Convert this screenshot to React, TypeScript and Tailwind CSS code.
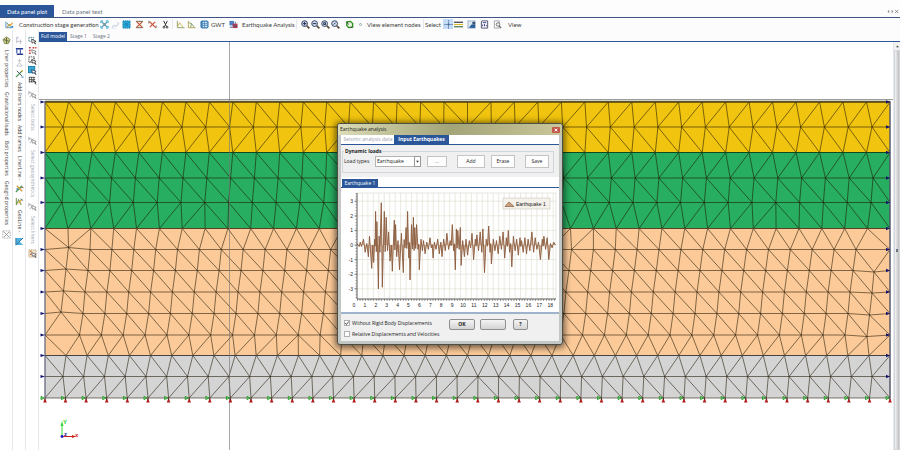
import type { ReactNode } from 'react';

type Row = { y: number; from: number; to: number; count: number };
type Point = [number, number];

const LEFT = 45;
const RIGHT = 890;

// inner nodes of each mesh row, the edge nodes are added at both sides
const rows: Row[] = [
  { y: 102, from: 68.5, to: 866.5, count: 35 },
  { y: 127, from: 63, to: 872, count: 35 },
  { y: 152.5, from: 68.5, to: 866.5, count: 35 },
  { y: 178, from: 64, to: 873, count: 35 },
  { y: 202.5, from: 62, to: 871, count: 35 },
  { y: 228.5, from: 68, to: 867.5, count: 36 },
  { y: 249.5, from: 90, to: 856, count: 36 },
  { y: 270.5, from: 88, to: 853, count: 36 },
  { y: 292, from: 85, to: 850, count: 36 },
  { y: 313.5, from: 83, to: 848, count: 36 },
  { y: 335, from: 79.5, to: 845, count: 36 },
  { y: 355.5, from: 66, to: 869, count: 39 },
  { y: 376.5, from: 63, to: 872, count: 40 },
  { y: 398, from: 65.5, to: 869.5, count: 40 },
];

// nodes near the edges that sit slightly off their row
const extraLeft: Record<number, Point> = {
  6: [68.5, 247.5],
  7: [66, 269],
  8: [63.5, 291],
  9: [61, 312],
};
const extraRight: Record<number, Point> = {
  7: [874, 272],
  8: [872, 293],
  9: [869.5, 315],
  10: [867, 336.5],
};

const mesh: Point[][] = rows.map((row, r) => {
  const step = (row.to - row.from) / (row.count - 1);
  const inner: Point[] = Array.from({ length: row.count }, (_, i) => [
    row.from + i * step,
    row.y,
  ]);
  if (extraLeft[r]) inner.unshift(extraLeft[r]);
  if (extraRight[r]) inner.push(extraRight[r]);
  return [[LEFT, row.y], ...inner, [RIGHT, row.y]];
});

const dist = (a: Point, b: Point) => Math.hypot(a[0] - b[0], a[1] - b[1]);

// joins two rows into a strip of triangles, always taking the shorter diagonal
function strip(a: Point[], b: Point[]) {
  let i = 0;
  let j = 0;
  let d = '';
  while (i < a.length - 1 || j < b.length - 1) {
    if (i === a.length - 1) j++;
    else if (j === b.length - 1) i++;
    else if (dist(a[i], b[j + 1]) < dist(a[i + 1], b[j])) j++;
    else i++;
    d += `M${a[i][0].toFixed(1)} ${a[i][1]}L${b[j][0].toFixed(1)} ${b[j][1]}`;
  }
  return d;
}

const meshPath =
  mesh.map((row) => 'M' + row.map((p) => `${p[0].toFixed(1)} ${p[1]}`).join('L')).join('') +
  mesh.slice(1).map((row, i) => strip(mesh[i], row)).join('');

const layers = [
  { y: 102, height: 50.5, fill: '#f1c40f', line: '#4a3c00' },
  { y: 152.5, height: 76, fill: '#27ae60', line: '#0c4a20' },
  { y: 228.5, height: 127, fill: '#fcca98', line: '#5c4023' },
  { y: 355.5, height: 42.5, fill: '#d4d4d4', line: '#444444' },
];

function Model() {
  return (
    <svg
      viewBox="39 42 854 408"
      preserveAspectRatio="xMidYMin meet"
      className="block h-full w-full"
      role="img"
      aria-label="Model"
    >
      <path d="M39 99.5H893" stroke="#9a9a9a" />
      {layers.map((l) => (
        <rect key={l.y} x={LEFT} y={l.y} width={RIGHT - LEFT} height={l.height} fill={l.fill} />
      ))}
      <path d={meshPath} fill="none" stroke="#1d1400" strokeWidth="0.7" strokeOpacity="0.8" />
      {layers.map((l) => (
        <path key={l.y} d={`M${LEFT} ${l.y}H${RIGHT}`} stroke={l.line} strokeWidth="1.2" />
      ))}
      <path d="M45 101.5H890" stroke="#55502a" strokeWidth="1.4" />
      <path d="M45 101V398M890 101V398" stroke="#5b5f7a" strokeWidth="1.2" />
      <path d="M229.5 42V450" stroke="#777" strokeWidth="0.8" strokeOpacity="0.8" />
      {rows.slice(0, -1).map((r) => (
        <g key={r.y} fill="#14146e">
          <path d={`M40.5 ${r.y - 1.5}L45 ${r.y}L40.5 ${r.y + 1.5}Z`} />
          <path d={`M886 ${r.y - 1.7}L890 ${r.y}L886 ${r.y + 1.7}Z`} />
        </g>
      ))}
      {mesh[mesh.length - 1].map(([x, y]) => (
        <g key={x}>
          <path d={`M${x - 4} ${y - 1.6}L${x - 0.8} ${y}L${x - 4} ${y + 1.6}Z`} fill="#8fe08f" stroke="#138a13" strokeWidth="0.8" />
          <path d={`M${x} ${y}L${x + 1.8} ${y + 4.5}H${x - 1.8}Z`} fill="#b01c1c" />
          <circle cx={x} cy={y + 1} r="0.7" fill="#3a1010" />
        </g>
      ))}
      <g strokeWidth="1" fontFamily="Liberation Sans, sans-serif" fontSize="6" fontWeight="bold">
        <path d="M62 436V424" stroke="#35d835" />
        <path d="M60.5 426L62 421L63.5 426Z" fill="#35d835" />
        <path d="M62 436.5H74" stroke="#cc2222" />
        <path d="M72 435L76 436.500L72 438Z" fill="#cc2222" />
        <circle cx="62" cy="436.5" r="1.4" fill="#1a1ac0" />
        <text x="63" y="424" fill="#22cc22">Y</text>
        <text x="64" y="436" fill="#1a1a90">z</text>
        <text x="75" y="437" fill="#cc2222">x</text>
      </g>
    </svg>
  );
}

/* ---------- icons ---------- */

function Svg({ children }: { children: ReactNode }) {
  return (
    <svg viewBox="0 0 10 10" className="size-[9px]" fill="none" strokeWidth="1" aria-hidden="true">
      {children}
    </svg>
  );
}

const icons = {
  stage: (
    <Svg>
      <path d="M1 2V8.500H9" stroke="#4a90c8" />
      <path d="M2 8L5 5L6 6L8.500 3" stroke="#e2a23a" strokeWidth="1.300" />
      <path d="M2 3L5 7" stroke="#4d8f5a" />
      <path d="M5 8H9V6.500L7 7Z" fill="#2d86c4" />
    </Svg>
  ),
  expand: (
    <Svg>
      <path d="M2 2L8 8M8 2L2 8" stroke="#3a8fb0" strokeWidth="1.200" />
      <path d="M1 3.500V1H3.500M6.500 1H9V3.500M9 6.500V9H6.500M3.500 9H1V6.500" stroke="#2aa0c8" />
      <rect x="3.500" y="3.500" width="3" height="3" fill="#7a9aa8" />
    </Svg>
  ),
  faint: (
    <Svg>
      <path d="M1 8L4 6L6 7L9 3" stroke="#a9bfd4" />
      <path d="M6 2L9 5M1 9H6" stroke="#c9d4de" strokeDasharray="1.500 1" />
    </Svg>
  ),
  region: (
    <Svg>
      <rect x="1" y="1" width="8" height="8" fill="#2aa9d8" stroke="#1678a4" strokeDasharray="1.500 0.800" />
      <path d="M3 3H7V7H3Z" fill="#1f8fc0" />
    </Svg>
  ),
  cutBars: (
    <Svg>
      <path d="M1 1.500H9M1 8.500H9" stroke="#6b5340" />
      <path d="M2 2L8 8M8 2L2 8" stroke="#c8502c" strokeWidth="1.300" />
    </Svg>
  ),
  cut: (
    <Svg>
      <path d="M1.500 1.500L8.500 8.500M8 2L2 8" stroke="#cc4d33" strokeWidth="1.300" />
      <path d="M1 1V4M9 6V9" stroke="#7b6a5c" />
    </Svg>
  ),
  scissors: (
    <Svg>
      <path d="M3 1L6 7M7 1L4 7" stroke="#333" strokeWidth="1.100" />
      <circle cx="3.300" cy="8" r="1" stroke="#333" />
      <circle cx="6.700" cy="8" r="1" stroke="#333" />
    </Svg>
  ),
  plotA: (
    <Svg>
      <path d="M1.500 1V8.500H9.500" stroke="#8a9a60" />
      <path d="M2 7L4 3L6 6L8 7.500" stroke="#c6b24c" />
    </Svg>
  ),
  plotB: (
    <Svg>
      <path d="M1.500 1V8.500H9.500" stroke="#b0a24a" />
      <path d="M2 3L5 4L8 8M4 8L5 4" stroke="#7d9a5e" />
    </Svg>
  ),
  water: (
    <Svg>
      <rect x="0.500" y="0.500" width="9" height="9" rx="2" fill="#3c7fb4" />
      <path d="M3 2H8V8H3Z" fill="#cfe3f2" />
      <path d="M3 4H8M3 6H8M5 2V8" stroke="#3c7fb4" strokeWidth="0.800" />
    </Svg>
  ),
  quake: (
    <Svg>
      <rect x="0.500" y="1" width="5" height="5" fill="#4a7fc0" />
      <rect x="4" y="4" width="5.500" height="5" fill="#b0404e" />
      <path d="M1 8H4M7 2V4M5 6L9 7.500" stroke="#3a4f90" />
    </Svg>
  ),
  green: (
    <Svg>
      <path d="M2 2L6 1.500L8.500 4V8L4 8.500L2 6Z" fill="#e9f6df" stroke="#2f8f1f" strokeWidth="1.500" />
      <path d="M2 2L4 5M6 8L8 8" stroke="#333" />
    </Svg>
  ),
  cross: (
    <Svg>
      <path d="M5 0V10M0 5H10" stroke="#5f7fa8" strokeWidth="0.800" />
      <circle cx="5" cy="5" r="1" fill="#3f5f90" />
    </Svg>
  ),
  lines: (
    <Svg>
      <path d="M0 2.500H10" stroke="#333" strokeWidth="1.300" />
      <path d="M0 5H10" stroke="#d8b400" />
      <path d="M0 7.500H10" stroke="#3f6f4a" strokeWidth="1.300" />
    </Svg>
  ),
  picture: (
    <Svg>
      <rect x="1" y="1" width="8" height="8" fill="#dce8f4" stroke="#8da4bd" strokeWidth="0.800" />
      <path d="M2 8.500L5 5H9V9Z" fill="#2d5f9c" />
      <path d="M6 2H9V5H6Z" fill="#35506e" />
    </Svg>
  ),
  report: (
    <Svg>
      <path d="M2 1H8.500V9H1.500V2Z" fill="#fff" stroke="#4a4a66" />
      <path d="M3 3H7M3 7V5M5 7V4.500M7 7V5.500" stroke="#2b3a80" />
    </Svg>
  ),
  preview: (
    <Svg>
      <path d="M1.500 1H7V9H1.500Z" fill="#fff" stroke="#8a8a8a" strokeWidth="0.800" />
      <circle cx="5.500" cy="5" r="2" stroke="#666" strokeWidth="0.900" fill="#eee" />
      <path d="M7 6.500L9 9" stroke="#666" strokeWidth="1.200" />
    </Svg>
  ),
  globe: (
    <Svg>
      <path d="M5 1L9 4L7 8.500H3L1 4Z" fill="#e3cc7a" stroke="#6f8a55" />
      <path d="M2 4L8 6M5 2V8" stroke="#47614a" />
    </Svg>
  ),
  faintNode: (
    <Svg>
      <path d="M2 1V8M2 6H8M6 4V9" stroke="#b9bcc4" />
      <path d="M1 1H4V3H1Z" fill="#ccd" />
    </Svg>
  ),
  beam: (
    <Svg>
      <path d="M1 2H9M2 8H9" stroke="#2b3c8c" strokeWidth="1.600" />
      <path d="M2 2V7M6 2V8" stroke="#4963b8" strokeWidth="1.400" />
    </Svg>
  ),
  faintPin: (
    <Svg>
      <path d="M5 1V5L2 9H8L5 5" stroke="#bfc3c8" />
      <path d="M3 3H7" stroke="#bfc3c8" />
    </Svg>
  ),
  tools: (
    <Svg>
      <path d="M1 9L8 2" stroke="#3e8f4a" strokeWidth="1.300" />
      <path d="M2 2L8 8" stroke="#3b4a58" />
      <circle cx="8" cy="2" r="1" fill="#d8b23a" />
      <path d="M7 9H9.500" stroke="#2f78b8" />
    </Svg>
  ),
  toolsWarm: (
    <Svg>
      <path d="M1 9L8 2" stroke="#4b9a56" strokeWidth="1.500" />
      <path d="M2 2L8 8" stroke="#d59b35" strokeWidth="1.500" />
      <circle cx="2.500" cy="5.500" r="1" fill="#4a84bb" />
      <path d="M7 4H9.500" stroke="#7a5a3a" />
    </Svg>
  ),
  line: (
    <Svg>
      <path d="M1.500 1V9M1.500 9L4 3L7 9" stroke="#7f9a58" strokeWidth="1.200" />
      <path d="M4 7L8 2" stroke="#e0a92f" strokeWidth="1.500" />
      <path d="M6 2L9 4" stroke="#4a84bb" />
    </Svg>
  ),
  geo: (
    <Svg>
      <path d="M1 1H9L5 5L9 9H1Z" fill="#4fb2dc" />
      <path d="M1 1V9M1 9L9 1" stroke="#2b6d9c" />
    </Svg>
  ),
  pick: (
    <Svg>
      <path d="M1 1.500H6V5" stroke="#3d7f8c" strokeDasharray="1.500 0.700" />
      <path d="M1 2V6H4" stroke="#3d7f8c" strokeDasharray="1.500 0.700" />
      <path d="M4 3.500L9 6L7 6.500L8.500 9L6 7L4.500 8Z" fill="#fff" stroke="#222" strokeWidth="0.800" />
    </Svg>
  ),
  pickRed: (
    <Svg>
      <path d="M1 2H3M5 2H7M1 5H3M1 8H3M8 2H9.500" stroke="#c84040" strokeWidth="1.600" />
      <path d="M4 4L9 6L7.500 7L9 9.500L6.500 7.500L5 8Z" fill="#fff" stroke="#555" strokeWidth="0.700" />
    </Svg>
  ),
  pickBox: (
    <Svg>
      <rect x="1" y="1" width="6" height="6" stroke="#444" strokeDasharray="1.500 0.800" />
      <path d="M2 7L7 2" stroke="#777" />
      <path d="M4 4L9 6L7.500 7L9 9.500L6.500 7.500L5 8Z" fill="#fff" stroke="#222" strokeWidth="0.800" />
    </Svg>
  ),
  pickFill: (
    <Svg>
      <rect x="0.500" y="0.500" width="7" height="7" fill="#39a9d8" stroke="#1d7aa6" />
      <path d="M4 4L9 6L7.500 7L9 9.500L6.500 7.500L5 8Z" fill="#fff" stroke="#124" strokeWidth="0.800" />
    </Svg>
  ),
  pickGrid: (
    <Svg>
      <path d="M1 1.500H8M1 4H8M1 6.500H6M1.500 1V7M4 1V7M6.500 1V7" stroke="#444" strokeWidth="0.900" />
      <path d="M5 5L9 7L7.500 7.500L9 9.500" stroke="#222" strokeWidth="0.900" />
    </Svg>
  ),
  pickFaint: (
    <Svg>
      <path d="M1 1V5M1 3H4M2 8L6 3" stroke="#a4a8ae" />
      <path d="M4 4L9 6L7.500 7L9 9.500L6.500 7.500L5 8Z" fill="#fff" stroke="#777" strokeWidth="0.800" />
    </Svg>
  ),
  pickWarm: (
    <Svg>
      <rect x="1" y="1" width="8" height="8" fill="#f3e3c6" stroke="#b9a88c" strokeDasharray="1.500 0.800" />
      <path d="M2 3L4 2M2 6H4" stroke="#cf7a3a" strokeWidth="1.300" />
      <path d="M4 4L9 6L7.500 7L9 9.500L6.500 7.500L5 8Z" fill="#fff" stroke="#445" strokeWidth="0.800" />
    </Svg>
  ),
  grid: (
    <Svg>
      <rect x="1" y="1" width="8" height="8" stroke="#aaa" strokeDasharray="2 1" />
      <path d="M2 2L8 8M8 2L2 8" stroke="#999" />
    </Svg>
  ),
};

function Zoom({ mark }: { mark: string }) {
  return (
    <Svg>
      <circle cx="4" cy="4" r="3.200" fill="#cfdcef" stroke="#3a4660" strokeWidth="1.100" />
      <path d="M6.500 6.500L9.300 9.300" stroke="#5d4a3a" strokeWidth="1.800" />
      <path d={mark} stroke="#22304e" strokeWidth="1.100" />
    </Svg>
  );
}

type IconName = keyof typeof icons;

function Tool({ name }: { name: IconName }) {
  return (
    <button type="button" aria-label={name} className="flex size-[9px] shrink-0 items-center">
      {icons[name]}
    </button>
  );
}

function Separator() {
  return <span className="h-[10px] w-px shrink-0 bg-gray-200" />;
}

function Toolbar() {
  return (
    <div className="flex h-3 items-center bg-[#fcfcfc] pl-[5px] whitespace-nowrap">
      <div className="flex w-[95px] items-center gap-[5px]">
        <Tool name="stage" />
        <button type="button">Construction stage generation</button>
      </div>
      <div className="flex w-[72px] items-center gap-[2px]">
        <Tool name="expand" />
        <Tool name="faint" />
        <Tool name="region" />
        <span className="flex flex-1 items-center justify-around">
          <Tool name="cutBars" />
          <Tool name="cut" />
          <Tool name="scissors" />
        </span>
      </div>
      <Separator />
      <div className="flex w-[26px] items-center gap-[2px] pl-[3px]">
        <Tool name="plotA" />
        <Tool name="plotB" />
      </div>
      <div className="flex w-[29px] items-center gap-[2px] pl-[1px]">
        <Tool name="water" />
        <button type="button">GWT</button>
      </div>
      <div className="flex w-[68px] items-center gap-1 pl-[1px]">
        <Tool name="quake" />
        <button type="button">Earthquake Analysis</button>
      </div>
      <Separator />
      <div className="flex w-[46px] items-center gap-[1px] pl-1">
        {['M2 4H6M4 2V6', 'M2 4H6', 'M3 3H5V5H3Z', 'M3 5L5 3'].map((mark) => (
          <button key={mark} type="button" aria-label="Zoom" className="size-[9px] shrink-0">
            <Zoom mark={mark} />
          </button>
        ))}
      </div>
      <div className="flex w-[80px] items-center gap-[5px] pl-[2px]">
        <Tool name="green" />
        <span className="size-[3px] rounded-full border border-gray-400" />
        <button type="button">View element nodes</button>
      </div>
      <Separator />
      <div className="flex items-center gap-[1px] pl-px">
        <button type="button" className="w-[17px] text-left">Select</button>
        <span className="flex h-[10px] w-[10px] items-center justify-center bg-[#c3dbf5]">
          <Tool name="cross" />
        </span>
        <Tool name="lines" />
      </div>
      <div className="flex items-center gap-[4px] pl-[4px]">
        <Tool name="picture" />
        <Tool name="report" />
        <span className="flex items-center gap-[6px]">
          <Tool name="preview" />
          <button type="button">View</button>
        </span>
      </div>
    </div>
  );
}

function SideBar({ children, gap = 'gap-[5px]' }: { children: ReactNode; gap?: string }) {
  return (
    <div
      className={`flex w-[13px] shrink-0 flex-col items-center overflow-hidden border-r border-gray-200 bg-white pt-[6px] font-['Open_Sans','Liberation_Sans',sans-serif] text-[5px] ${gap}`}
    >
      {children}
    </div>
  );
}

function SideText({ children, muted }: { children: ReactNode; muted?: boolean }) {
  return (
    <button
      type="button"
      className={`text-left whitespace-nowrap [writing-mode:vertical-rl] ${muted ? 'text-gray-400' : ''}`}
    >
      {children}
    </button>
  );
}

/* ---------- earthquake chart ---------- */

// time in tenths of the axis unit, acceleration
const signal: Point[] = [
  [0, 0.1], [2, -0.1], [3, 0.2], [4, -0.1], [6, 0.4], [7.5, -0.5], [9, 0.1], [10.5, -0.8], [11.5, 0.6],
  [13.5, -1.6], [14.5, 0], [15.3, -1.2], [16.2, 0.4], [17.1, 2.3], [18.3, 1.6], [19.6, -3], [21, -0.5],
  [22.3, 2.9], [23.2, -2.9], [25, 2.3], [26.8, 1.9], [28, -0.4], [29, 0.9], [30.3, -1.1], [31.5, 0],
  [32.4, -1.8], [34.2, 1.7], [35.4, 1.4], [36.4, -0.8], [37.6, 0.3], [39, -1.7], [40.7, 0.8],
  [42.5, -1.9], [44, -0.2], [45, 1.2], [46.4, 2.3], [47.5, -0.9], [48.6, -2.4], [50, 1.4], [51.7, 1.9],
  [53, 1.2], [54.7, 1.4], [56, -0.3], [57.2, -1.7], [58.7, 0.4], [60, -0.4], [61, 0.3], [62.5, -0.6],
  [64, 0.2], [65.5, -0.3], [67, 0.5], [68.2, -0.2], [69.8, -0.9], [71, 0.2], [72.5, -0.3], [74, 0.4],
  [75.5, -0.6], [77, 0.2], [78, -0.8], [79.5, 0.4], [81, -0.4], [82.5, 0.8], [84, -0.3], [85.5, 0.3],
  [87.4, 1.4], [88.6, -0.4], [90.2, -1.7], [91.2, 1.1], [92.5, 1], [93.8, -0.3], [94.8, 1.2],
  [95.5, -1.4], [97, 0.3], [98.5, -0.8], [100, 0.4], [101.5, -0.7], [103, 0.3], [104.2, -0.2],
  [105.5, 0.8], [107, -1], [108.5, 0.4], [110, 0.7], [111.5, -0.4], [113, 0.9], [114.5, -0.5],
  [115.5, 1.1], [117, -1.9], [118.5, 0.4], [120.8, 1.3], [122, -0.5], [123.3, -1.3], [125, 0.4],
  [126.5, -0.4], [128, 0.3], [129.5, -0.6], [131, 0.6], [132.5, -0.3], [134, 0.9], [135.5, -0.9],
  [137, 0.5], [138.8, 1], [140, -0.5], [142, -1.5], [143.5, 0.6], [145, -0.4], [146.5, 0.4], [148, -0.7],
  [149.5, 0.5], [151, 0.3], [152.5, -0.5], [154, 0.5], [155.5, -0.6], [157, 0.4], [158.5, -0.4],
  [160.5, 0.9], [162, -0.5], [163.5, 0.5], [165, -0.3], [166.5, 0.2], [168.3, -1], [170, 0.4],
  [171.5, 0.6], [173, -0.3], [174.5, 0.5], [176, -1], [177.5, 0.1], [179, -0.2], [180.5, 0.2], [182, 0],
];

// two spikes on the same side are split by a dip past zero
const spikes = signal.flatMap(([t, v], i): Point[] => {
  const next = signal[i + 1];
  if (!next || v * next[1] <= 0) return [[t, v]];
  return [[t, v], [(t + next[0]) / 2, -v * 0.2]];
});

const px = (t: number) => 16 + t * 1.09;
const py = (v: number) => 57 - v * 14.6;
const wave = spikes.map(([t, v]) => `${px(t).toFixed(1)} ${py(v).toFixed(1)}`).join('L');

function QuakeChart() {
  return (
    <svg
      viewBox="0 0 218 124"
      className="block w-full"
      role="img"
      aria-label="Earthquake 1"
      fontFamily="Liberation Sans, sans-serif"
      fontSize="5"
      fill="#222"
    >
      {Array.from({ length: 36 }, (_, i) => (
        <path key={i} d={`M${px(i * 5 + 5)} 5V111`} stroke="#dcdccd" strokeWidth="0.6" />
      ))}
      {[3, 2, 1, 0, -1, -2, -3].map((v) => (
        <g key={v}>
          <path d={`M16 ${py(v)}H215`} stroke="#dcdccd" strokeWidth="0.6" />
          <path d={`M13.500 ${py(v)}H16`} stroke="#555" strokeWidth="0.7" />
          <text x="12" y={py(v) + 2} textAnchor="end">{v}</text>
        </g>
      ))}
      <rect x="16" y="5" width="199" height="106" fill="none" stroke="#d5d5cc" strokeWidth="0.6" />
      <path d={`M16 57L${wave}L215 57Z`} fill="#c9a183" fillOpacity="0.8" />
      <path d={`M${wave}`} fill="none" stroke="#8a5a3c" strokeWidth="0.9" />
      <path d="M16 5V111H215" fill="none" stroke="#555" strokeWidth="0.9" />
      <path d="M15 5V111" stroke="#555" strokeDasharray="0.600 2.300" />
      <path d="M16 112H215" stroke="#555" strokeWidth="1.500" strokeDasharray="0.700 2" />
      {Array.from({ length: 19 }, (_, i) => (
        <text key={i} x={px(i * 10) - 3} y="119" textAnchor="middle">{i}</text>
      ))}
      <rect x="162" y="10" width="47" height="11" fill="#f3f1ea" stroke="#d2cfc4" strokeWidth="0.7" />
      <path d="M164 18.500L168 14L173 18.500Z" fill="#c9a183" stroke="#8a5a3c" strokeWidth="0.7" />
      <text x="175" y="17.500">Earthquake 1</text>
    </svg>
  );
}

function DialogButton({ children, className = '', label }: { children?: ReactNode; className?: string; label?: string }) {
  return (
    <button
      type="button"
      aria-label={label}
      className={`flex items-center justify-center border ${className}`}
    >
      {children}
    </button>
  );
}

function QuakeDialog() {
  const flat = 'border-[#c4c4c4] bg-[#fdfdfd]';
  const classic = 'h-[11px] rounded-[2px] border-[#8f8f8f] bg-linear-to-b from-[#f4f4f4] to-[#d4d4d4]';

  return (
    <section
      role="dialog"
      aria-label="Earthquake analysis"
      className="absolute top-[123px] left-1/2 flex w-[226px] -translate-x-1/2 flex-col rounded-[3px] border border-[#4b4f45] bg-[#c3c7c4] px-[3px] pb-[3px] font-['Open_Sans','Liberation_Sans',sans-serif] text-[5px] text-[#222] shadow-[0_1px_6px_2px_rgba(0,0,0,0.55)]"
    >
      <header className="-mx-[3px] flex h-[11px] items-center justify-between rounded-t-[2px] bg-linear-to-r from-[#dcdcb8] via-[#a3a478] to-[#c9c79a] px-[2px]">
        <h2>Earthquake analysis</h2>
        <button type="button" aria-label="Close" className="flex h-[6px] w-[8px] items-center justify-center rounded-[1px] bg-[#c4574b]">
          <svg viewBox="0 0 6 6" className="size-[4px]" aria-hidden="true">
            <path d="M1 1L5 5M5 1L1 5" stroke="#fff" strokeWidth="1.500" />
          </svg>
        </button>
      </header>

      <div className="bg-[#f0f0f0] whitespace-nowrap">
        <div className="flex h-[10px] items-stretch border-b border-[#2b579a] bg-white pl-px">
          <button type="button" className="w-[52px] text-gray-400">Seismic analysis data</button>
          <button type="button" className="w-[55px] bg-[#2b579a] font-bold text-white">Input Earthquakes</button>
        </div>

        <div className="h-8 pt-[3px] pr-[5px] pl-px">
          <fieldset className="border border-gray-300 pb-[4px]">
            <legend className="ml-px px-px font-bold">Dynamic loads</legend>
            <div className="flex items-center pl-px">
              <label htmlFor="load" className="w-[31px]">Load types</label>
              <span className="relative mr-[6px] flex">
                <select id="load" className="h-[11px] w-[46px] appearance-none border border-[#b5b5b5] bg-white pl-px">
                  <option>Earthquake</option>
                </select>
                <span className="pointer-events-none absolute inset-y-0 right-0 flex w-[7px] items-center justify-center border border-[#999]">
                  <svg viewBox="0 0 4 4" className="size-[3px]" aria-hidden="true">
                    <path d="M0 1H4L2 3.500Z" fill="#444" />
                  </svg>
                </span>
              </span>
              <DialogButton className={`mr-[10px] h-[11px] w-[20px] text-gray-500 ${flat}`}>...</DialogButton>
              <DialogButton className={`mr-[6px] h-[13px] w-[28px] ${flat}`}>Add</DialogButton>
              <DialogButton className={`mr-[10px] h-[13px] w-[24px] ${flat}`}>Erase</DialogButton>
              <DialogButton className={`h-[13px] w-[24px] ${flat}`}>Save</DialogButton>
            </div>
          </fieldset>
        </div>

        <div className="border-b-2 border-[#9fb4cc] bg-white pt-[2px]">
          <div className="flex h-[9px] border-b border-[#2b579a] pl-px">
            <button type="button" className="w-[36px] bg-[#2b579a] text-white">Earthquake 1</button>
          </div>
          <QuakeChart />
        </div>

        <div className="flex h-[27px] items-start pt-[5px] pl-[3px]">
          <div className="flex w-[105px] flex-col gap-[5px] pt-px">
            <Check id="rigid" label="Without Rigid Body Displacements" checked />
            <Check id="relative" label="Relative Displacements and Velocities" />
          </div>
          <DialogButton className={`mr-[5px] w-[26px] font-bold ${classic}`}>OK</DialogButton>
          <DialogButton className={`mr-[7px] w-[26px] ${classic}`} label="Cancel" />
          <DialogButton className={`w-[15px] font-bold ${classic}`}>?</DialogButton>
        </div>
      </div>
    </section>
  );
}

function Check({ id, label, checked = false }: { id: string; label: string; checked?: boolean }) {
  return (
    <div className="flex h-[6px] items-center gap-[2px]">
      <span className="relative flex">
        <input id={id} type="checkbox" defaultChecked={checked} className="peer size-[6px] appearance-none border border-[#b0b0b0] bg-white" />
        <svg viewBox="0 0 6 6" className="pointer-events-none absolute inset-0 size-[6px] opacity-0 peer-checked:opacity-100" aria-hidden="true">
          <path d="M1.200 3L2.500 4.500L4.800 1.500" fill="none" stroke="#333" strokeWidth="0.900" />
        </svg>
      </span>
      <label htmlFor={id}>{label}</label>
    </div>
  );
}

function App() {
  return (
    <main className="relative flex h-screen flex-col overflow-hidden bg-white font-['Lato','Liberation_Sans',sans-serif] text-[6px] leading-[7px] text-[#3c3c3c]">
      <nav className="flex h-[18px] shrink-0 items-stretch border-b border-[#3d5685] bg-[#fdfdfd] pt-[5px]">
        <button type="button" className="w-[54px] bg-[#2b579a] text-white">Data panel plot</button>
        <button type="button" className="px-2 text-gray-500">Data panel text</button>
        <span className="ml-auto flex items-center pr-px">
          <svg viewBox="0 0 14 6" className="h-[5px] w-[13px]" aria-hidden="true">
            <path d="M3 1V5L1 3ZM6 1V5L8 3Z" fill="#888" />
            <path d="M10 1L14 5M14 1L10 5" stroke="#777" strokeWidth="0.900" />
          </svg>
        </span>
      </nav>
      <Toolbar />

      <div className="flex min-h-0 flex-1">
        <SideBar>
          <Tool name="globe" />
          <SideText>Liner properties</SideText>
          <SideText>Gravitational loads</SideText>
          <SideText>Bolt properties</SideText>
          <SideText>Geogrid properties</SideText>
          <Tool name="grid" />
        </SideBar>
        <SideBar gap="gap-1">
          <div className="flex flex-col gap-[2px]">
            <Tool name="faintNode" />
            <Tool name="beam" />
            <Tool name="faintPin" />
            <Tool name="tools" />
          </div>
          <SideText>Add liners nodes</SideText>
          <SideText>Add frames</SideText>
          <SideText>LinerLine -</SideText>
          <Tool name="toolsWarm" />
          <Tool name="line" />
          <SideText>GeoLine -</SideText>
          <Tool name="geo" />
        </SideBar>
        <SideBar>
          <div className="flex flex-col gap-[1px]">
            <Tool name="pick" />
            <Tool name="pickRed" />
            <Tool name="pickBox" />
            <Tool name="pickFill" />
            <Tool name="pickGrid" />
          </div>
          <Tool name="pickFaint" />
          <SideText muted>Select bolts</SideText>
          <Tool name="pickFaint" />
          <SideText muted>Select geosynthetics</SideText>
          <Tool name="pickFaint" />
          <SideText muted>Select liners</SideText>
          <Tool name="pickWarm" />
        </SideBar>

        <div className="flex min-w-0 flex-1 flex-col">
          <nav className="flex h-3 shrink-0 items-stretch border-b border-[#2b579a] bg-[#fcfcfc] pt-[2px] font-['Open_Sans','Liberation_Sans',sans-serif] text-[5px] whitespace-nowrap">
            <button type="button" className="w-[28px] bg-[#2b579a] text-white">Full model</button>
            <button type="button" className="w-[23px] text-gray-500">Stage 1</button>
            <button type="button" className="w-[23px] text-gray-500">Stage 2</button>
          </nav>
          <div className="flex min-h-0 flex-1">
            <div className="min-w-0 flex-1">
              <Model />
            </div>
            <div className="flex w-[7px] shrink-0 flex-col border-l border-gray-200 bg-[#f2f2f2]">
              <span className="flex h-2 items-center justify-center">
                <svg viewBox="0 0 4 4" className="size-[3px]" aria-hidden="true">
                  <path d="M0 3L2 0.500L4 3Z" fill="#444" />
                </svg>
              </span>
              <span className="flex flex-1 items-center justify-center border border-gray-300 bg-linear-to-r from-[#f4f4f4] to-[#bdbdbd]">
                <span className="h-[3px] w-[2px] bg-gray-500" />
              </span>
            </div>
          </div>
        </div>
      </div>

      <QuakeDialog />
    </main>
  );
}

export default App;
